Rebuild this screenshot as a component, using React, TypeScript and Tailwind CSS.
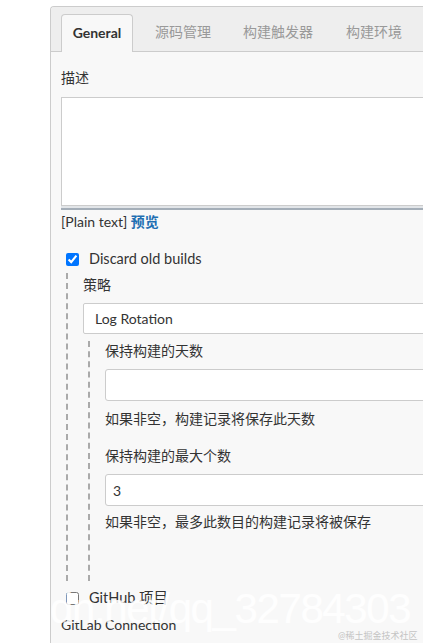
import React from "react"

const font = { fontFamily: 'Lato, "Noto Sans CJK SC", sans-serif' }

function Tabs() {
  return (
    <div className="flex h-[45px] border-b border-[#cccccc] bg-[#eeeeee] pl-[10px] rounded-tl-[3px]">
      <div className="mt-[7px] flex h-[38px] w-[72px] items-center justify-center rounded-t-[4px] border border-b-0 border-[#cccccc] bg-[#f8f8f8] pb-[3px] text-[14px] font-bold text-[#333333]">
        General
      </div>
      <div className="ml-[22px] flex items-center pt-[4px] text-[14px] text-[#999999]">源码管理</div>
      <div className="ml-[32px] flex items-center pt-[4px] text-[14px] text-[#999999]">构建触发器</div>
      <div className="ml-[33px] flex items-center pt-[4px] text-[14px] text-[#999999]">构建环境</div>
    </div>
  )
}

function Field({ label, value, help, first }: { label: string; value?: string; help: string; first?: boolean }) {
  return (
    <div className={first ? "" : "mt-[17px]"}>
      <div className="leading-[20px]">{label}</div>
      <div className="mt-[8px] flex h-[32px] items-center rounded-[3px] border border-[#cccccc] bg-white pl-[7px] text-[14px]">
        {value}
      </div>
      <div className="leading-[20px]" style={{ marginTop: first ? 8 : 6 }}>
        {help}
      </div>
    </div>
  )
}

export default function App() {
  return (
    <div className="relative h-[643px] w-[423px] overflow-hidden bg-white text-[14px] text-[#333333]" style={font}>
      <div className="ml-[50px] mt-[6px] w-[480px] rounded-tl-[4px] border-l border-t border-[#cccccc] bg-[#f8f8f8]">
        <Tabs />
        <div className="pl-[10px]">
          <div className="mt-[16px] leading-[20px]">描述</div>
          <div className="mt-[9px] h-[109px] border border-[#cccccc] bg-white" />
          <div className="h-[4px] border-b-2 border-[#a4aeb8] bg-[#e2e5e8]" />
          <div className="mt-[2px] leading-[20px]">
            <span className="text-[#333333]">[Plain text]</span>{" "}
            <span className="font-bold text-[#1f6fb2]">预览</span>
          </div>

          <label className="mt-[17px] flex h-[20px] items-center">
            <input type="checkbox" defaultChecked className="ml-[5px] h-[13px] w-[13px] accent-[#0075ff]" />
            <span className="ml-[10px] text-[14.5px] leading-[20px]">Discard old builds</span>
          </label>

          <div className="ml-[5px] mt-[4px] border-l-2 border-dashed border-[#aaaaaa] pl-[15px] pt-[2px]">
            <div className="leading-[20px]">策略</div>
            <div className="mt-[8px] flex h-[31px] items-center rounded-[2px] border border-[#cccccc] bg-white pl-[11px]">
              Log Rotation
            </div>
            <div className="ml-[5px] mt-[7px] border-l-2 border-dashed border-[#aaaaaa] pb-[49px] pl-[15px]">
              <Field first label="保持构建的天数" help="如果非空，构建记录将保存此天数" />
              <Field label="保持构建的最大个数" value="3" help="如果非空，最多此数目的构建记录将被保存" />
            </div>
          </div>

          <label className="mt-[7px] flex h-[20px] items-center">
            <input type="checkbox" className="ml-[5px] h-[13px] w-[13px]" />
            <span className="ml-[10px] text-[14.5px] leading-[20px]">GitHub 项目</span>
          </label>
          <div className="mt-[7px] leading-[20px]">GitLab Connection</div>
          <div className="mt-[8px] border-t border-[#cccccc]" />
        </div>
      </div>

      <div
        className="pointer-events-none absolute left-[50px] top-[588px] whitespace-nowrap text-[42px] leading-none tracking-[-1.4px] text-white/85"
        style={{ fontFamily: '"Liberation Sans", sans-serif' }}
      >
        dn.net/qq_32784303
      </div>
      <div className="pointer-events-none absolute left-[338px] top-[631px] whitespace-nowrap text-[9px] leading-none text-[#c4c4c4]">
        @稀土掘金技术社区
      </div>
    </div>
  )
}
